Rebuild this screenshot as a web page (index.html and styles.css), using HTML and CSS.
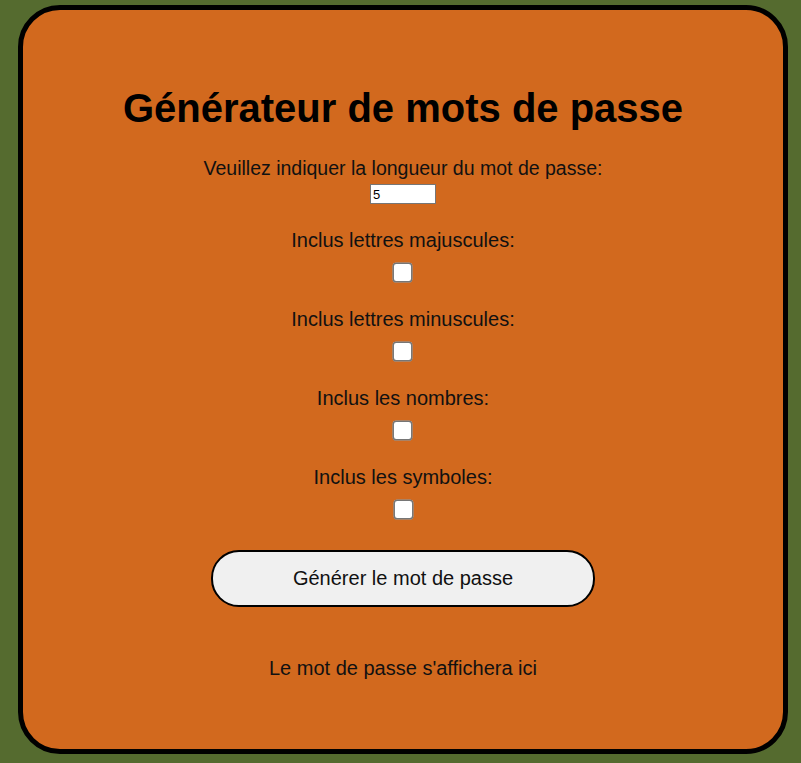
FILE: index.html
```html
<!DOCTYPE html>
<html lang="fr">
<head>
<meta charset="utf-8">
<title>Générateur de mots de passe</title>
<link rel="stylesheet" href="styles.css">
</head>
<body>
<main class="card">
  <h1 class="title">Générateur de mots de passe</h1>
  <div class="field">
    <label class="label label-first" for="len">Veuillez indiquer la longueur du mot de passe:</label>
    <input class="num" id="len" type="text" value="5">
  </div>
  <div class="field">
    <label class="label" for="up">Inclus lettres majuscules:</label>
    <input class="check" id="up" type="checkbox">
  </div>
  <div class="field">
    <label class="label" for="low">Inclus lettres minuscules:</label>
    <input class="check" id="low" type="checkbox">
  </div>
  <div class="field">
    <label class="label" for="nb">Inclus les nombres:</label>
    <input class="check" id="nb" type="checkbox">
  </div>
  <div class="field">
    <label class="label" for="sym">Inclus les symboles:</label>
    <input class="check" id="sym" type="checkbox">
  </div>
  <button class="btn" type="button">Générer le mot de passe</button>
  <p class="output">Le mot de passe s'affichera ici</p>
</main>
</body>
</html>
```
FILE: styles.css
```css
html, body {
  margin: 0;
  padding: 0;
}
body {
  background: #556b2f;
  font-family: "Liberation Sans", Arial, sans-serif;
  padding: 5px 13px 9px 18px;
}
.card {
  box-sizing: border-box;
  width: 770px;
  height: 749px;
  background: #d2691e;
  border: 5px solid #000;
  border-radius: 42px;
  display: flex;
  flex-direction: column;
  align-items: center;
  padding-top: 75px;
}
.title {
  font-size: 40px;
  font-weight: bold;
  line-height: 46px;
  margin: 0 0 26px;
}
.field {
  display: flex;
  flex-direction: column;
  align-items: center;
}
.label {
  font-size: 20px;
  line-height: 23px;
  color: #111;
}
.label-first {
  font-size: 19.5px;
}
.num {
  box-sizing: border-box;
  width: 66px;
  height: 20px;
  margin: 4px 0 25px;
  padding: 0 2px;
  border: 1px solid #767676;
  font-family: "Liberation Sans", Arial, sans-serif;
  font-size: 13px;
  background: #fff;
}
.check {
  width: 13px;
  height: 13px;
  margin: 13.5px 0 29.5px;
  transform: scale(1.55);
}
.btn {
  box-sizing: border-box;
  width: 384px;
  height: 57px;
  margin-top: 5px;
  border: 2px solid #000;
  border-radius: 28px;
  background: #f0f0f0;
  font-family: "Liberation Sans", Arial, sans-serif;
  font-size: 20px;
  color: #111;
}
.output {
  font-size: 20px;
  line-height: 23px;
  margin: 50px 0 0;
  color: #111;
}
```
